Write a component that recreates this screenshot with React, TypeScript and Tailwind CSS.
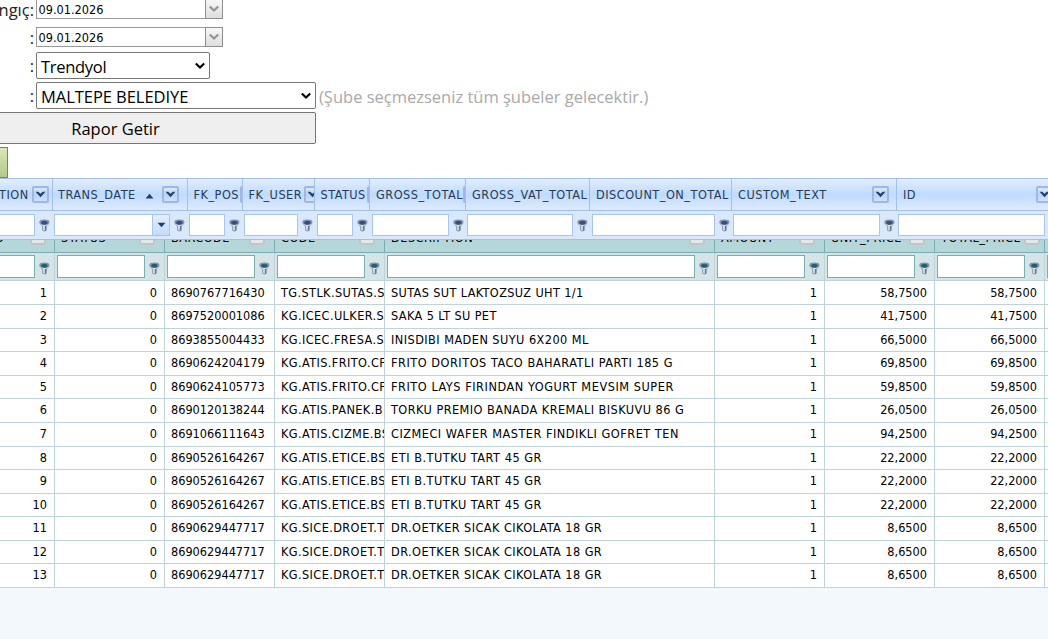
import type { ReactNode } from "react";

const UI = "font-['Open_Sans','Noto_Sans',sans-serif]";
const GRID = "font-['DejaVu_Sans_Condensed','DejaVu_Sans',sans-serif] [font-stretch:condensed]";

function Funnel({ color }: { color: string }) {
  return (
    <svg width="11" height="13" viewBox="0 0 11 13" className="shrink-0">
      <path d="M0.8 3.4 C1 5.6 3.6 6.4 3.6 8 V11.4 Q5.4 12.8 7.2 11.4 V8 C7.2 6.4 9.8 5.6 10 3.4 Z" fill="#d3dde8" stroke="#8595aa" strokeWidth="0.9" />
      <path d="M5.9 7 H7.2 V11.6 L5.9 12 Z" fill="#66788f" />
      <ellipse cx="5.4" cy="3" rx="5" ry="2.4" fill="#8292a8" />
      <ellipse cx="5.4" cy="3.7" rx="3.2" ry="2" fill={color} />
    </svg>
  );
}

function MenuButton() {
  return (
    <span className="flex h-[17px] w-[17px] shrink-0 items-center justify-center rounded-[2px] border-2 border-[#a3b5e6] bg-gradient-to-b from-[#dce9ff] via-[#b6d5fb] to-[#cfe2ff]">
      <svg width="11" height="7" viewBox="0 0 11 7">
        <path d="M0.5 0.8 H3.2 L5.5 2.8 L7.8 0.8 H10.5 L5.5 6.2 Z" fill="#22406e" />
      </svg>
    </span>
  );
}

function Chevron({ className }: { className: string }) {
  return (
    <svg width="12" height="8" viewBox="0 0 12 8" className={className}>
      <path d="M1.8 1.5 L6 5.5 L10.2 1.5" fill="none" stroke="currentColor" strokeWidth="2.2" />
    </svg>
  );
}

function DateBox() {
  return (
    <div className="flex h-5 w-[187px] border border-[#9a9a9a] bg-white">
      <span className={`${GRID} flex-1 pl-[1.5px] text-[12.6px] leading-[19px] text-black`}>09.01.2026</span>
      <span className="-my-px -mr-px flex w-[18px] items-center justify-center border border-[#8e8e8e] bg-gradient-to-b from-[#f7f7f7] to-[#dedede]">
        <Chevron className="text-[#929292]" />
      </span>
    </div>
  );
}

function FormRow({ label, className, children }: { label: string; className: string; children: ReactNode }) {
  return (
    <div className={`flex items-center ${className}`}>
      <span className="flex w-[36px] shrink-0 justify-end pt-px pr-[2px] text-[#222]">{label}</span>
      {children}
    </div>
  );
}

type MasterColumn = {
  name: string;
  cell: string;
  pad: string;
  funnel: string;
  text?: string;
  kind?: "date" | "last";
  menu?: string;
  sorted?: boolean;
};

const master: MasterColumn[] = [
  { name: "TION", cell: "w-[53px]", pad: "pl-0", funnel: "w-[18px]", text: "-ml-[6px]", menu: "right-[3px]" },
  { name: "TRANS_DATE", cell: "w-[135px]", pad: "pl-px", funnel: "w-[18px]", kind: "date", menu: "right-[8px]", sorted: true },
  { name: "FK_POS", cell: "w-[55px]", pad: "pl-px", funnel: "w-[18px]", text: "ml-[0.5px]", menu: "-right-[15px]" },
  { name: "FK_USER", cell: "w-[72px]", pad: "pl-px", funnel: "w-[17px]", text: "ml-[0.5px]", menu: "-right-[7px]" },
  { name: "STATUS", cell: "w-[55px]", pad: "pl-[2px]", funnel: "w-[17px]", text: "ml-[0.5px]", menu: "-right-[15px]" },
  { name: "GROSS_TOTAL", cell: "w-[96px]", pad: "pl-[2px]", funnel: "w-[17px]", text: "ml-px", menu: "-right-[15px]" },
  { name: "GROSS_VAT_TOTAL", cell: "w-[124px]", pad: "pl-px", funnel: "w-[17px]", text: "ml-px" },
  { name: "DISCOUNT_ON_TOTAL", cell: "w-[142px]", pad: "pl-[2px]", funnel: "w-[17px]", text: "ml-px" },
  { name: "CUSTOM_TEXT", cell: "w-[165px]", pad: "pl-px", funnel: "w-[17px]", text: "ml-px", menu: "right-[7px]" },
  { name: "ID", cell: "w-[165px]", pad: "pl-px", funnel: "w-[17px]", text: "ml-px", kind: "last", menu: "right-[8px]" },
];

const detail = [
  { name: "O", cell: "w-[55px] pr-2", text: "-ml-[11px]" },
  { name: "STATUS", cell: "w-[110px] pr-[9px]" },
  { name: "BARCODE", cell: "w-[110px] pr-[9px]" },
  { name: "CODE", cell: "w-[110px] pr-[9px]" },
  { name: "DESCRIPTION", cell: "w-[330px] pr-[9px]" },
  { name: "AMOUNT", cell: "w-[110px] pr-[9px]" },
  { name: "UNIT_PRICE", cell: "w-[110px] pr-[9px]" },
  { name: "TOTAL_PRICE", cell: "w-[110px] pr-1" },
];

const rows = [
  ["8690767716430", "TG.STLK.SUTAS.S", "SUTAS SUT LAKTOZSUZ UHT 1/1", "58,7500", "tracking-[0.37px]"],
  ["8697520001086", "KG.ICEC.ULKER.S", "SAKA 5 LT SU PET", "41,7500", "tracking-[0.38px]"],
  ["8693855004433", "KG.ICEC.FRESA.SS", "INISDIBI MADEN SUYU 6X200 ML", "66,5000", "tracking-[0.45px]"],
  ["8690624204179", "KG.ATIS.FRITO.CF", "FRITO DORITOS TACO BAHARATLI PARTI 185 G", "69,8500", "tracking-[0.52px]"],
  ["8690624105773", "KG.ATIS.FRITO.CF", "FRITO LAYS FIRINDAN YOGURT MEVSIM SUPER", "59,8500", "tracking-[0.54px]"],
  ["8690120138244", "KG.ATIS.PANEK.B", "TORKU PREMIO BANADA KREMALI BISKUVU 86 G", "26,0500", "tracking-[0.45px]"],
  ["8691066111643", "KG.ATIS.CIZME.BS", "CIZMECI WAFER MASTER FINDIKLI GOFRET TEN", "94,2500", "tracking-[0.5px]"],
  ["8690526164267", "KG.ATIS.ETICE.BS", "ETI B.TUTKU TART 45 GR", "22,2000", "tracking-[0.53px]"],
  ["8690526164267", "KG.ATIS.ETICE.BS", "ETI B.TUTKU TART 45 GR", "22,2000", "tracking-[0.53px]"],
  ["8690526164267", "KG.ATIS.ETICE.BS", "ETI B.TUTKU TART 45 GR", "22,2000", "tracking-[0.53px]"],
  ["8690629447717", "KG.SICE.DROET.T", "DR.OETKER SICAK CIKOLATA 18 GR", "8,6500", "tracking-[0.43px]"],
  ["8690629447717", "KG.SICE.DROET.T", "DR.OETKER SICAK CIKOLATA 18 GR", "8,6500", "tracking-[0.43px]"],
  ["8690629447717", "KG.SICE.DROET.T", "DR.OETKER SICAK CIKOLATA 18 GR", "8,6500", "tracking-[0.43px]"],
];

const shortRows = [2, 4, 7, 9, 11];

function Cell({ className, children }: { className: string; children?: ReactNode }) {
  return (
    <div className={`shrink-0 overflow-hidden border-r border-[#bfd3d9] whitespace-nowrap ${className}`}>{children}</div>
  );
}

function ReportForm() {
  return (
    <div className={`${UI} flex h-[178px] shrink-0 flex-col overflow-hidden text-[16.5px] leading-[22px]`}>
      <FormRow label="ngıç:" className="-mt-px h-5">
        <DateBox />
      </FormRow>
      <FormRow label=":" className="mt-2 h-5">
        <DateBox />
      </FormRow>
      <FormRow label=":" className="mt-[5px] h-[27px]">
        <div className="flex h-[27px] w-[174px] items-center justify-between rounded-[2px] border border-[#767676] bg-white pr-[3px] pl-[4px] text-black">
          <span className="pt-[2px] tracking-[-0.3px]">Trendyol</span>
          <Chevron className="text-black" />
        </div>
      </FormRow>
      <FormRow label=":" className="mt-[3px] h-[27px]">
        <div className="flex h-[27px] w-[280px] items-center justify-between rounded-[2px] border border-[#767676] bg-white pr-[3px] pl-[4px] text-black">
          <span className="pt-[2px] tracking-[-0.05px]">MALTEPE BELEDIYE</span>
          <Chevron className="text-black" />
        </div>
        <span className="ml-[3px] pt-[2px] whitespace-nowrap text-[#a9a9a9]">
          (Şube seçmezseniz tüm şubeler gelecektir.)
        </span>
      </FormRow>
      <div className="mt-[3px] -ml-[85px] flex h-8 w-[401px] shrink-0 items-center justify-center rounded-[2px] border border-[#767676] bg-[#efefef] pt-px text-black">
        Rapor Getir
      </div>
      <div className="mt-[3px] -ml-2 h-[31px] w-4 shrink-0 border border-[#70895a] bg-gradient-to-b from-[#d9e6b8] to-[#b4c98c]" />
    </div>
  );
}

function MasterHeader() {
  return (
    <div className="shrink-0">
      <div className="flex h-[33px] w-[1162px] border-y border-[#a3c0e8] bg-gradient-to-b from-[#e3eeff] via-[#bfdbff] to-[#deebff]">
        {master.map((c) => (
          <div key={c.name} className={`relative flex shrink-0 items-center overflow-hidden border-r border-[#a3c0e8] pl-[5px] whitespace-nowrap ${c.cell}`}>
            <span className={`pt-[2px] tracking-[0.5px] text-[#283b56] ${c.text ?? ""}`}>{c.name}</span>
            {c.sorted && (
              <svg width="9" height="6" viewBox="0 0 9 6" className="mt-[2px] ml-[9px]">
                <path d="M0.5 5.5 L4.5 0.8 L8.5 5.5 Z" fill="#22406e" />
              </svg>
            )}
            {c.menu && (
              <span className={`absolute top-[7px] ${c.menu}`}>
                <MenuButton />
              </span>
            )}
          </div>
        ))}
      </div>
      <div className="flex h-[29px] w-[1162px] border-b border-[#a3c0e8] bg-[#dae8fd]">
        {master.map((c, i) => (
          <div key={c.name} className={`flex shrink-0 items-center ${c.pad} ${c.cell}`}>
            <div className={`flex h-[22px] border border-[#a9c5ef] bg-white ${c.kind === "last" ? "w-[147px]" : "flex-1"} ${i ? "" : "border-l-0"}`}>
              {c.kind === "date" && (
                <span className="ml-auto flex w-[17px] items-center justify-center border-l border-[#a9c5ef] bg-gradient-to-b from-[#e3eeff] to-[#c3dcfd]">
                  <svg width="9" height="6" viewBox="0 0 9 6">
                    <path d="M0.5 0.8 L4.5 5.2 L8.5 0.8 Z" fill="#22406e" />
                  </svg>
                </span>
              )}
            </div>
            {c.kind !== "last" && (
              <span className={`flex pt-px pl-1 ${c.funnel}`}>
                <Funnel color="#33507f" />
              </span>
            )}
          </div>
        ))}
      </div>
    </div>
  );
}

function DetailGrid() {
  return (
    <div className="shrink-0">
      <div className="flex h-[13px] w-[1100px] overflow-hidden border-b border-[#7aaeb2] bg-[#b6d7da]">
        {detail.map((c) => (
          <div key={c.name} className={`flex shrink-0 items-end justify-between overflow-hidden border-r border-[#7aaeb2] pl-[6px] text-black ${c.cell}`}>
            <span className={`mb-[6px] leading-4 tracking-[0.5px] whitespace-nowrap ${c.text ?? ""}`}>{c.name}</span>
            <span className="mb-[7px] h-4 w-4 shrink-0 rounded-[3px] border-2 border-[#c0c6c8] bg-[#e4e8e9]" />
          </div>
        ))}
      </div>
      <div className="flex h-7 w-[1100px] border-b border-[#bfd3d9] bg-[#d5e4e6]">
        {detail.map((c, i) => (
          <div key={c.name} className={`flex shrink-0 items-center border-r border-[#bfd3d9] ${i ? "pl-[2px]" : ""} ${c.cell.split(" ")[0]}`}>
            <div className={`h-[23px] flex-1 border border-[#7aaeb2] bg-white ${i ? "" : "border-l-0"}`} />
            <span className="flex w-[19px] pt-[3px] pl-[3.5px]">
              <Funnel color="#275e72" />
            </span>
          </div>
        ))}
        <div className="mt-[2px] ml-[2px] h-[23px] w-10 border border-[#7aaeb2] bg-white" />
      </div>
      {rows.map(([barcode, code, description, price, tracking], i) => (
        <div
          key={i}
          className={`flex w-[1100px] items-stretch border-b border-[#bfd3d9] bg-white text-black ${i ? "leading-[21px]" : "leading-[23px]"} ${shortRows.includes(i) ? "h-[23px]" : "h-6"}`}
        >
          <Cell className="w-[55px] pr-[7px] text-right">{i + 1}</Cell>
          <Cell className="w-[110px] pr-[7px] text-right">0</Cell>
          <Cell className="w-[110px] pl-[6px]">{barcode}</Cell>
          <Cell className="w-[110px] pl-[6px] tracking-[0.4px]">{code}</Cell>
          <Cell className={`w-[330px] pl-[6px] ${tracking}`}>{description}</Cell>
          <Cell className="w-[110px] pr-[7px] text-right">1</Cell>
          <Cell className="w-[110px] pr-[7px] text-right">{price}</Cell>
          <Cell className="w-[110px] pr-[7px] text-right">{price}</Cell>
        </div>
      ))}
    </div>
  );
}

export default function App() {
  return (
    <div className="flex h-[639px] w-[1048px] flex-col overflow-hidden bg-white">
      <ReportForm />
      <div className={`${GRID} flex flex-1 flex-col overflow-hidden bg-[#f3f8fc] text-[12.6px]`}>
        <MasterHeader />
        <DetailGrid />
      </div>
    </div>
  );
}
